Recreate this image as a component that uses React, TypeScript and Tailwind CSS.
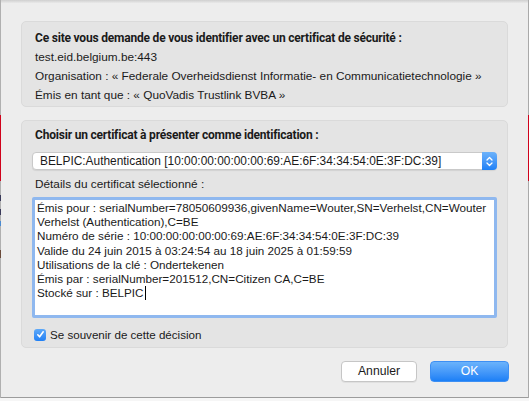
import React from "react";

const font = { fontFamily: '"Liberation Sans", Arial, sans-serif' };
const boldFont = { fontFamily: 'Roboto, "Liberation Sans", Arial, sans-serif' };

const certLines = [
  "Émis pour : serialNumber=78050609936,givenName=Wouter,SN=Verhelst,CN=Wouter",
  "Verhelst (Authentication),C=BE",
  "Numéro de série : 10:00:00:00:00:00:69:AE:6F:34:34:54:0E:3F:DC:39",
  "Valide du 24 juin 2015 à 03:24:54 au 18 juin 2025 à 01:59:59",
  "Utilisations de la clé : Ondertekenen",
  "Émis par : serialNumber=201512,CN=Citizen CA,C=BE",
];

export default function App() {
  return (
    <div className="w-[529px] h-[401px] flex flex-col bg-[#f4f4f4] text-[#1a1a1a]" style={font}>
      <div className="flex h-[398px]">
        {/* left window edge */}
        <div className="w-[1px] flex flex-col bg-[#b0b0b0]">
          <div className="h-[115px]" />
          <div className="h-[66px] bg-[#d0021b]" />
          <div className="h-[14px]" />
          <div className="h-[6px] bg-[#3a3a5a]" />
          <div className="h-[8px]" />
          <div className="h-[6px] bg-[#3a3a5a]" />
          <div className="h-[6px]" />
          <div className="h-[5px] bg-[#4a8ad0]" />
          <div className="h-[24px]" />
          <div className="h-[8px] bg-[#6a4a3a]" />
        </div>

        {/* window */}
        <div className="w-[527px] flex flex-col bg-[#ededed] border-b border-[#9c9c9c]">
          <div className="h-[3px] bg-gradient-to-b from-[#cfcfcf] to-[#e9e9e9]" />

          <div className="mx-[20px] mt-[18px] h-[86px] rounded-[5px] bg-[#e4e4e4] border border-[#dadada] px-[13px] pt-[7px] text-[11.8px] leading-[19px] whitespace-nowrap">
            <p className="font-bold text-[12px] tracking-[-0.2px]" style={boldFont}>Ce site vous demande de vous identifier avec un certificat de sécurité :</p>
            <p>test.eid.belgium.be:443</p>
            <p>Organisation : « Federale Overheidsdienst Informatie- en Communicatietechnologie »</p>
            <p>Émis en tant que : « QuoVadis Trustlink BVBA »</p>
          </div>

          <div className="mx-[20px] mt-[13px] h-[228px] rounded-[5px] bg-[#e4e4e4] border border-[#dadada] pt-[5px] text-[11.8px] leading-[19px] flex flex-col whitespace-nowrap">
            <p className="font-bold text-[12px] tracking-[-0.2px] px-[13px]" style={boldFont}>Choisir un certificat à présenter comme identification :</p>

            <div className="mx-[10px] mt-[7px] h-[18px] flex bg-white rounded-[4px] border border-[#c9c9c9] shadow-[0_1px_1px_rgba(0,0,0,0.08)]">
              <div className="flex-1 pl-[7px] text-[11.9px] leading-[16px] overflow-hidden">
                BELPIC:Authentication [10:00:00:00:00:00:69:AE:6F:34:34:54:0E:3F:DC:39]
              </div>
              <div className="w-[15px] -my-[1px] -mr-[1px] rounded-r-[4px] bg-gradient-to-b from-[#6cb2fa] to-[#1d80f6] flex items-center justify-center">
                <svg width="7" height="11" viewBox="0 0 7 11" fill="none" stroke="white" strokeWidth="1.3" strokeLinecap="round" strokeLinejoin="round">
                  <path d="M1 4 L3.5 1.5 L6 4" />
                  <path d="M1 7 L3.5 9.5 L6 7" />
                </svg>
              </div>
            </div>

            <p className="px-[13px] mt-[5px]">Détails du certificat sélectionné :</p>

            <div className="mx-[10px] mt-[3px] h-[121px] bg-white border-[3px] border-[#8fb8ef] rounded-[2px] pl-[2px] pt-[1px] text-[11.7px] leading-[14.2px] overflow-hidden">
              {certLines.map((l) => (
                <div key={l}>{l}</div>
              ))}
              <div className="flex items-center">
                Stocké sur : BELPIC
                <span className="inline-block w-[1px] h-[14px] bg-black ml-[1px]" />
              </div>
            </div>

            <label className="flex items-center gap-[4px] pl-[12px] mt-[7px]">
              <span className="w-[12px] h-[12px] rounded-[3px] bg-gradient-to-b from-[#5ea9f8] to-[#1f80f5] flex items-center justify-center">
                <svg width="9" height="9" viewBox="0 0 9 9" fill="none" stroke="white" strokeWidth="1.6" strokeLinecap="round" strokeLinejoin="round">
                  <path d="M1.8 4.8 L3.6 6.8 L7.2 1.8" />
                </svg>
              </span>
              <span className="text-[11.6px]">Se souvenir de cette décision</span>
            </label>
          </div>

          <div className="flex justify-end gap-[13px] mx-[19px] mt-[13px]">
            <button className="w-[76px] h-[21px] bg-white border border-[#c6c6c6] rounded-[4px] text-[12.2px] leading-[19px] text-[#1a1a1a] shadow-[0_1px_0_rgba(0,0,0,0.05)]">
              Annuler
            </button>
            <button className="w-[79px] h-[21px] rounded-[4px] bg-gradient-to-b from-[#6bb3fb] to-[#1a7ff6] border border-[#3d8ff3] text-[12.2px] leading-[19px] text-white">
              OK
            </button>
          </div>
        </div>

        {/* right window edge */}
        <div className="w-[1px] flex flex-col bg-[#a9a9a9]">
          <div className="h-[115px]" />
          <div className="h-[66px] bg-[#d0021b]" />
        </div>
      </div>
      <div className="flex-1 bg-[#f6f6f6]" />
    </div>
  );
}
